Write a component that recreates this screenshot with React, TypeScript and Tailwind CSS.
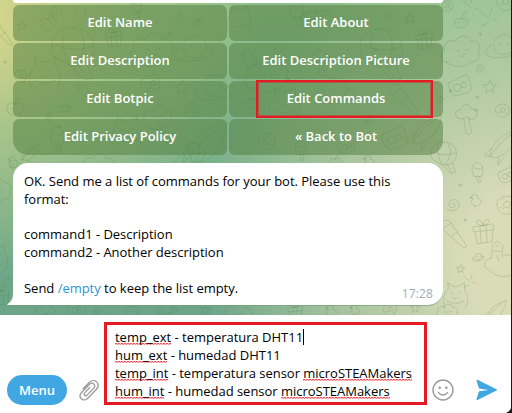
import React from "react";

const doodleShapes = {
  cloud: "M6 30c-7-1-8-10-2-13-3-8 6-14 12-10 3-8 15-8 17 0 8-2 13 7 8 12 4 7-3 12-9 11-7 7-18 6-26 0zM15 16q3 4 6 0M25 15q3 4 6 0M20 22q4 4 7-1",
  star: "M7 0l2 5 5 0-4 4 1 5-4-3-5 3 1-5-4-4 5 0z",
  swirl: "M6 6c2-2 4 1 2 3-3 2-6-1-5-4 2-5 9-4 10 1 0 6-7 9-12 5",
  camera: "M3 9l17-8q3 0 4 3l3 12q0 3-3 4l-14 4q-4 0-5-3l-4-9q0-2 2-3zM11 11a4 4 0 1 0 1 8 4 4 0 1 0-1-8M18 9a3 3 0 1 0 1 6 3 3 0 1 0-1-6",
  gift: "M2 8l20-3 1 6-20 2zM4 13l2 12 15-2 1-12M9 8l1 16M15 7l1 16M12 7q-8-1-6-5 4-3 6 5 2-9 6-6 1 4-6 6",
  apple: "M9 6C2 2-2 10 3 15c3 3 10 3 13-1 4-7-2-12-7-8zM9 6q0-4 4-6M5 10l2 1M11 10l2-1",
  balloon: "M22 2a19 19 0 1 1-7 36L2 30A19 19 0 0 1 22 2zM11 7q-2 14 6 31M28 4q10 18-3 33M3 18q16 9 38 2M19 40l14 14 8-2-6-15M27 39l8 14",
  planet: "M10 9a12 12 0 0 1 23 5M7 13c-9 5-8 13 3 14 14 1 30-4 30-11 0-4-4-5-7-3M10 13q-1 8 6 10 12 4 17-9M16 12l2 1M25 12l2-1",
  ice: "M3 13Q0 3 8 1q8 0 8 8l-1 9-10 0zM8 18l2 8 3-1-1-7M5 7q5 4 10 0",
  bird: "M5 9Q1 4 7 2q6 0 5 6 6 0 5 6-3 6-10 4-7-3-2-9M5 5l-4 2 3 1M8 19l0 3",
  carrot: "M2 4q5-7 11-1l17 25q1 5-4 2L6 12Q0 9 2 4M5 9l8-5M14 18l7-5",
  donut: "M17 2C6-1 0 7 3 15s15 9 19 1S22 4 17 2M13 7q-5 2-3 6 4 3 7-1 1-5-4-5M8 6l2-2M6 14l3 1M18 15l2 2",
  tree: "M4 19c-6-5 0-11 4-9C9 1 20 1 22 9c8-1 9 9 3 12-6 2-8-2-10-3-3 4-9 4-11 1M12 20l3 19q4 4 7-1l-4-19",
  cat: "M3 32Q-1 15 8 7L7 0l7 5 7-1 7-4 0 9q8 10 1 23M11 13l2 1M21 13l2-1M13 18q3 4 6 0M6 23q10 6 22 0",
  castle: "M5 28C-3 26 0 16 7 17l1-13 5-4 5 5-1 10 4-2 6 2 0 9q4 7-2 9-12 4-20-5M9 10l7 0M11 5l2 0M12 14l2 5",
  rocket: "M2 31Q4 10 34 1q-3 25-25 32zM2 31q15-19 25-25M3 23l-7 7 6 2M12 33l-1 8 6-8",
  spark: "M1 3l9 9M13 0l-2 8M14 12l4 2M8 16l-6 3",
};

type ShapeName = keyof typeof doodleShapes;

const doodles: [ShapeName, number, number, number?, number?][] = [
  ["swirl", 49, 4], ["apple", 39, 13], ["star", 18, 21, 0.6], ["spark", 73, 8],
  ["carrot", -9, 23, 0.7], ["balloon", 52, 26], ["gift", 104, 27, 0.8], ["cloud", 130, 32],
  ["planet", 174, 34], ["ice", 131, -1, 0.7], ["spark", 170, 13, 0.8], ["apple", 194, 17, 0.5],
  ["cat", 28, 57, 1], ["donut", 13, 69, 0.6], ["camera", 139, 73, 0.8], ["star", 176, 80],
  ["planet", 195, 73], ["carrot", 75, 82, 0.7], ["swirl", 44, 111, 0.7], ["star", 61, 103, 0.7],
  ["donut", 183, 102, 0.7], ["cloud", 142, 105, 0.7], ["rocket", 180, 121, 1.4], ["ice", 48, 126],
  ["cat", 110, 116], ["apple", 6, 98], ["bird", 7, 155, 0.7], ["swirl", 8, 159, 0.7],
  ["cloud", -19, 178, 0.7], ["carrot", -5, 207, 0.7, 80], ["cat", -18, 245, 0.8], ["apple", 2, 275, 0.7],
  ["gift", -9, 286, 0.8], ["rocket", 22, 144, 0.5], ["cloud", 80, 153, 0.8], ["balloon", 184, 142, 0.5],
  ["cat", 226, 6, 0.8], ["bird", 240, 48], ["apple", 246, 95, 0.8], ["ice", 288, -1],
  ["carrot", 298, 20, 0.8, -60], ["star", 406, 13, 0.7], ["swirl", 384, 12, 0.7], ["balloon", 361, 27],
  ["gift", 415, 29, 0.8], ["tree", 310, 48, 0.7], ["planet", 315, 76], ["cloud", 245, 58],
  ["cat", 268, 87], ["camera", 381, 125], ["rocket", 412, 114, 0.9], ["donut", 257, 132, 0.8],
  ["ice", 294, 140, 0.8], ["swirl", 362, 113, 0.8], ["carrot", 389, 84], ["camera", 337, 137, 0.7],
  ["apple", 330, 155, 0.7], ["bird", 363, 154, 0.7], ["spark", 461, -5], ["donut", 442, 0, 0.5],
  ["apple", 455, 14, 0.8], ["spark", 480, 7], ["donut", 496, -7, 0.8], ["cloud", 442, 35, 0.9],
  ["planet", 486, 33, 0.9], ["swirl", 476, 63, 0.7], ["camera", 448, 74, 0.9], ["star", 485, 80, 0.9],
  ["tree", 455, 102, 0.8], ["donut", 495, 103, 0.65], ["star", 438, 96, 0.5], ["rocket", 489, 128, 0.9],
  ["balloon", 432, 141, 0.6], ["ice", 471, 162, 0.8], ["camera", 498, 166, 0.7], ["swirl", 447, 198],
  ["bird", 470, 193, 0.7], ["donut", 496, 195, 0.9], ["carrot", 440, 220, 0.9], ["gift", 472, 219],
  ["star", 458, 265, 0.55], ["castle", 485, 241, 1.05], ["planet", 473, 253, 0.3], ["cat", 443, 283, 0.8],
  ["cloud", 437, 304, 0.5], ["rocket", 487, 300, 0.6], ["spark", 464, 274, 0.7], ["donut", 383, 303, 0.6],
  ["bird", 325, 304, 0.7], ["gift", 287, 303, 0.7], ["cloud", 222, 303, 0.7], ["star", 201, 305, 0.7],
  ["apple", 125, 303, 0.8], ["planet", 157, 302, 0.5], ["camera", 67, 300, 0.7], ["swirl", 93, 306, 0.7],
  ["tree", 35, 301, 0.7], ["bird", 350, 304, 0.6], ["star", 412, 304, 0.6],
];

const dots = [
  [170, 33], [94, 65], [5, 62], [137, 119], [451, 91], [481, 34], [478, 97], [461, 185],
  [466, 220], [477, 110], [59, 127], [288, 79], [376, 49],
];

function Wallpaper() {
  return (
    <svg
      className="absolute inset-0 h-full w-full"
      viewBox="0 0 512 315"
      fill="none"
      stroke="#4f7f3f"
      strokeOpacity="0.22"
      strokeLinecap="round"
      strokeLinejoin="round"
      aria-hidden="true"
    >
      {doodles.map(([shape, x, y, scale = 1, angle = 0], i) => (
        <path
          key={i}
          d={doodleShapes[shape]}
          transform={`translate(${x} ${y}) rotate(${angle}) scale(${scale})`}
          vectorEffect="non-scaling-stroke"
        />
      ))}
      {dots.map(([x, y], i) => (
        <circle key={i} cx={x} cy={y} r="1.2" />
      ))}
    </svg>
  );
}

const rows = [
  ["Edit Name", "Edit About"],
  ["Edit Description", "Edit Description Picture"],
  ["Edit Botpic", "Edit Commands"],
  ["Edit Privacy Policy", "« Back to Bot"],
];

function Keyboard() {
  return (
    <div className="grid w-[430px] grid-cols-2 gap-0.5 text-[13px] font-[560] text-white">
      {rows.flat().map((label, i) => (
        <button
          key={label}
          className={`relative flex h-9 items-center justify-center rounded-md bg-[#4f7c3c]/50 pb-px ${
            i === 6 ? "rounded-bl-[15px]" : i === 7 ? "rounded-br-[15px]" : ""
          }`}
        >
          {label}
          {label === "Edit Commands" && (
            <span className="absolute -top-px right-[10px] -bottom-px left-[27px] border-[2px] border-[#e31b23] shadow-[inset_0_0_0_1px_#e31b2380]" />
          )}
        </button>
      ))}
    </div>
  );
}

function Misspelled({ children }: { children: React.ReactNode }) {
  return (
    <span className="bg-[repeating-linear-gradient(90deg,#f0525c_0_2px,#fbc4c8_2px_3px),repeating-linear-gradient(90deg,#fbc4c8_0_2px,#f4868d_2px_3px)] bg-[length:100%_1px,100%_1px] bg-[position:0_15px,0_16px] bg-no-repeat">
      {children}
    </span>
  );
}

function Composer() {
  return (
    <div className="flex h-[98px] items-start bg-white pl-[7px]">
      <button className="mt-[60px] flex h-[30px] w-[60px] items-center justify-center rounded-full bg-[#40a7e3] pt-px text-[13px] font-[560] text-white">
        Menu
      </button>
      <svg className="mt-[64px] ml-[12px] h-6 w-[21px]" viewBox="0 0 21 24" fill="none" stroke="#999" strokeWidth="1.3" strokeLinecap="round" strokeLinejoin="round" aria-hidden="true">
        <path d="M4.200 9.800L10 3.700C12.300 1.300 15.500.900 17.600 2.900c2.100 2.100 1.900 5.200-.4 7.600l-8.300 8.700c-2 2.100-4.800 2.300-6.600.6-1.700-1.700-1.600-4.200.3-6.300l7.800-8.100c1.300-1.400 3.200-1.500 4.400-.4 1.200 1.200 1.100 3-.2 4.400l-6.300 6.500c-.8.9-1.900.9-2.600.3-.7-.7-.6-1.700.2-2.600l4.900-5.100" />
      </svg>
      <div className="mt-[7px] ml-1 h-[83px] w-[323px] border-[3px] border-[#e31b23] pt-[3px] pl-2 text-[13px] leading-[18px] tracking-[-0.02px] whitespace-nowrap text-black">
        <div className="flex items-center">
          <span><Misspelled>temp_ext</Misspelled> - temperatura DHT11</span>
          <span className="h-4 w-px bg-black" />
        </div>
        <div><Misspelled>hum_ext</Misspelled> - humedad DHT11</div>
        <div><Misspelled>temp_int</Misspelled> - temperatura sensor <Misspelled>microSTEAMakers</Misspelled></div>
        <div><Misspelled>hum_int</Misspelled> - humedad sensor <Misspelled>microSTEAMakers</Misspelled></div>
      </div>
      <svg className="mt-[64px] ml-[5px] h-[22px] w-[22px]" viewBox="0 0 22 22" fill="none" stroke="#999" strokeWidth="1.400" strokeLinecap="round" aria-hidden="true">
        <circle cx="11" cy="11" r="10" />
        <path d="M6.500 13.500c2 3.300 7 3.300 9 0" />
        <circle cx="7.700" cy="8.800" r="1.300" fill="#999" stroke="none" />
        <circle cx="14.300" cy="8.800" r="1.300" fill="#999" stroke="none" />
      </svg>
      <svg className="mt-[64px] ml-[22px] h-[22px] w-[22px]" viewBox="0 0 22 22" fill="#40a7e3" aria-hidden="true">
        <path d="M1.500.8L20.500 10.200q1.200.7 0 1.400L1.500 21q-1.200.4-1-.8L3 12.200l9.500-1.300L3 9.600.5 1.600Q.4.400 1.500.8z" />
      </svg>
    </div>
  );
}

export default function App() {
  return (
    <div className="flex h-[413px] w-[512px] overflow-hidden bg-[#181a17] font-['Open_Sans','Noto_Sans',sans-serif]">
      <main className="w-[511px] overflow-hidden rounded-br-[7px] bg-white">
        <section className="relative h-[315px] overflow-hidden bg-[radial-gradient(ellipse_290px_260px_at_-30px_15px,#d5d68b_8%,#c3cf8a99_45%,transparent_100%),radial-gradient(ellipse_330px_320px_at_530px_260px,#dadcb8_20%,#c9d4ac99_62%,transparent_100%),linear-gradient(180deg,#90c08d_0%,#80b58c_35%,#6ba487_100%)]">
          <Wallpaper />
          <div className="relative flex flex-col pl-[13px]">
            <div className="mb-0.5 h-[3px] w-[430px] rounded-b-md bg-white" />
            <Keyboard />
            <article className="relative mt-2 h-[142px] w-[430px] rounded-[15px] rounded-bl-none bg-white px-[11px] pt-[9px] text-[13px] leading-[18px] tracking-[-0.02px] text-black shadow-[0_1px_0_#719b7599]">
              <svg className="absolute bottom-0 -left-[6px] h-3 w-[7px]" viewBox="0 0 7 12" fill="white" aria-hidden="true">
                <path d="M7 0H6C6 6 4 9 .3 11.200q-.5.800.7.800H7z" />
              </svg>
              <p className="whitespace-nowrap">OK. Send me a list of commands for your bot. Please use this<br />format:</p>
              <p className="mt-[17px]">command1 - Description<br />command2 - Another description</p>
              <p className="mt-[18px]">Send <a className="text-[#2f94d0]">/empty</a> to keep the list empty.</p>
              <time className="absolute right-[10px] bottom-[2px] text-xs leading-[18px] tracking-[0.15px] text-[#a0acb6]">17:28</time>
            </article>
          </div>
        </section>
        <Composer />
      </main>
    </div>
  );
}
